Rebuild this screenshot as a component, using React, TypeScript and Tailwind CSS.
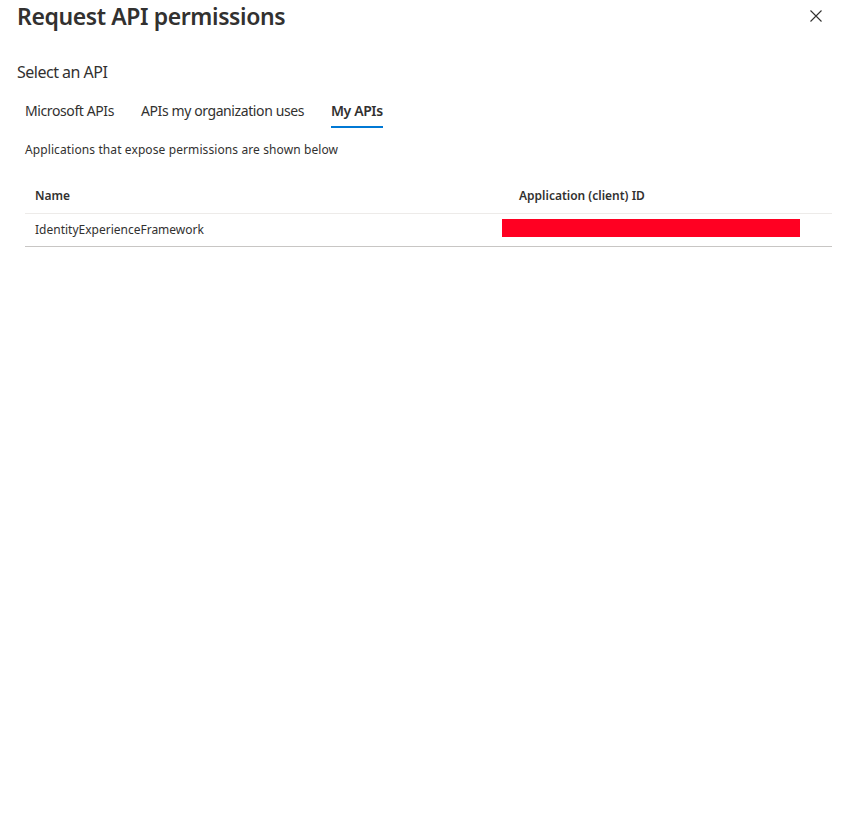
const tabs = [
  { label: "Microsoft APIs", active: false },
  { label: "APIs my organization uses", active: false },
  { label: "My APIs", active: true },
];

export default function App() {
  return (
    <main className="min-h-[823px] w-full bg-white text-[#323130] font-['Noto_Sans',sans-serif]">
      <header className="flex items-start justify-between pl-[17px] pr-[24px]">
        <h1 className="text-[23px] font-semibold leading-[32px] tracking-[-0.4px]">Request API permissions</h1>
        <button className="mt-[10px] flex h-[12px] w-[12px] items-center justify-center text-[#323130]" aria-label="Close">
          <svg width="12" height="12" viewBox="0 0 12 12" fill="none" stroke="currentColor" strokeWidth="1.1">
            <path d="M0.5 0.5 L11.5 11.5 M11.5 0.5 L0.5 11.5" />
          </svg>
        </button>
      </header>

      <section className="pl-[17px] pt-[29px]">
        <h2 className="text-[16px] leading-[22px] tracking-[-0.5px]">Select an API</h2>
      </section>

      <nav className="flex gap-[27px] pl-[25px] pt-[18px]">
        {tabs.map((t) => (
          <div key={t.label} className="flex flex-col">
            <span className={`text-[14px] leading-[20px] tracking-[-0.4px] ${t.active ? "font-semibold" : ""}`}>{t.label}</span>
            <span className={`mt-[5px] h-[2px] w-full ${t.active ? "bg-[#0078d4]" : "bg-transparent"}`} />
          </div>
        ))}
      </nav>

      <p className="pl-[25px] pt-[14px] text-[12px] leading-[16px] tracking-[0.1px]">Applications that expose permissions are shown below</p>

      <div className="ml-[25px] mr-[14px] mt-[30px]">
        <div className="grid grid-cols-[484px_1fr] border-b border-[#edebe9] h-[26px] text-[12px] font-semibold">
          <div className="pl-[10px] leading-[16px]">Name</div>
          <div className="pl-[10px] leading-[16px]">Application (client) ID</div>
        </div>
        <div className="grid grid-cols-[484px_1fr] items-start border-b border-[#c8c6c4] h-[33px] text-[12px]">
          <div className="pl-[10px] pt-[8px] leading-[16px]">IdentityExperienceFramework</div>
          <div className="flex pt-[5px]">
            <div className="ml-[-7px] h-[18px] w-[298px] bg-[#ff0022]" />
          </div>
        </div>
      </div>
    </main>
  );
}
